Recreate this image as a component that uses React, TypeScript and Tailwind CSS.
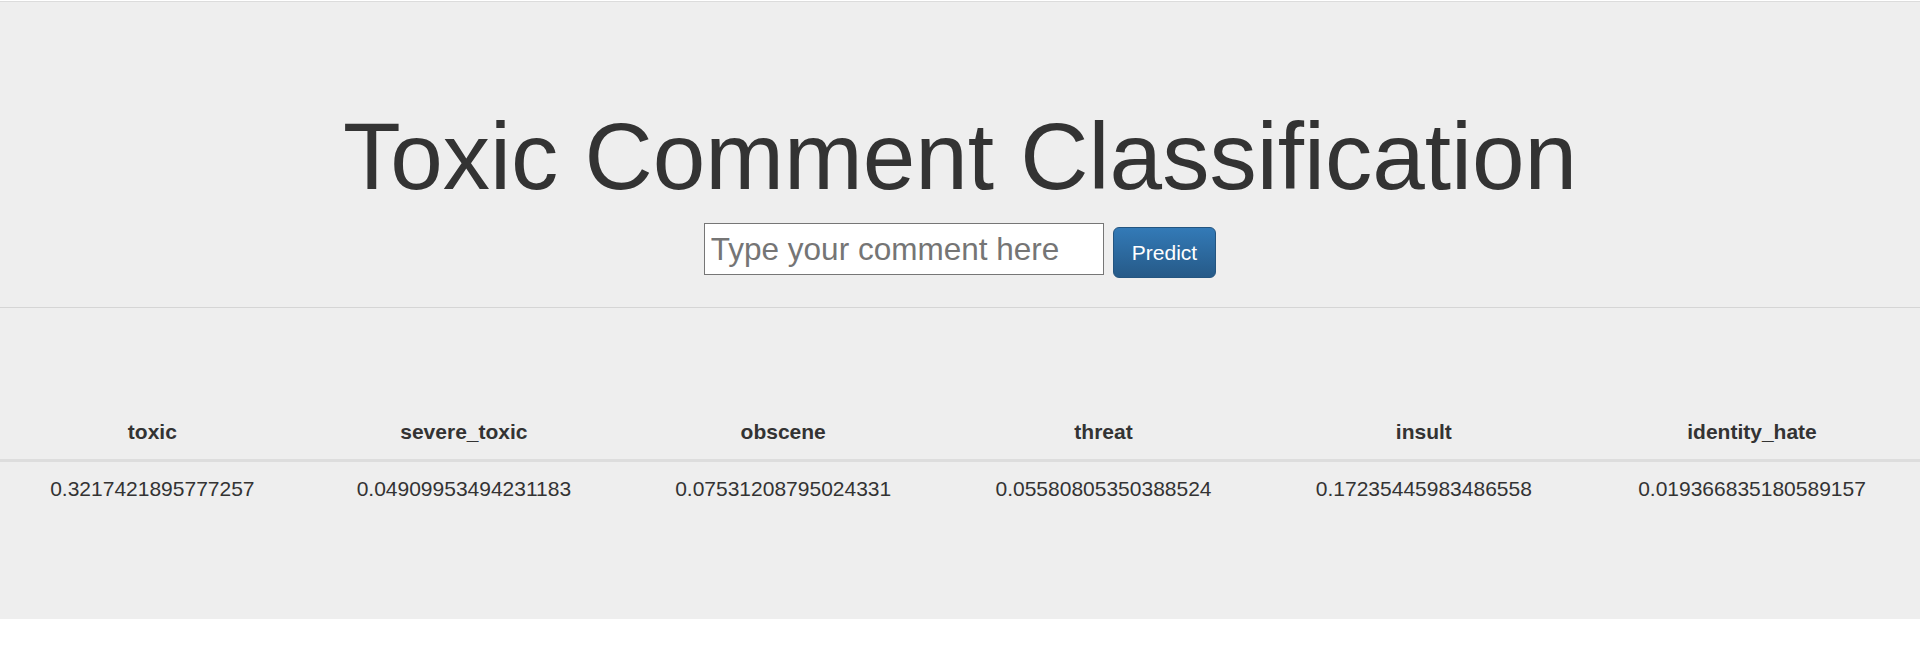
const labels = ["toxic", "severe_toxic", "obscene", "threat", "insult", "identity_hate"];

const scores = [
  "0.3217421895777257",
  "0.04909953494231183",
  "0.07531208795024331",
  "0.05580805350388524",
  "0.17235445983486558",
  "0.019366835180589157",
];

export default function App() {
  return (
    <div className="min-h-[654px] bg-white font-['Liberation_Sans',Arial,sans-serif] text-[#333333]">
      <div className="pt-px">
        <div className="h-[618px] border-t border-[#dcdcdc] bg-[#eeeeee]">
          <div className="flex flex-col items-center pt-[102px]">
            <h1 className="m-0 text-[94.5px] font-normal leading-[104px]">Toxic Comment Classification</h1>
            <form className="mt-[15px] flex items-start gap-[9px]" onSubmit={(e) => e.preventDefault()}>
              <input
                type="text"
                placeholder="Type your comment here"
                className="h-[52px] w-[400px] border border-[#767676] bg-white px-[6px] text-[31.5px] text-[#333] outline-none placeholder:text-[#757575]"
              />
              <button
                type="submit"
                className="mt-[4px] h-[51px] rounded-[6px] border border-[#245580] bg-gradient-to-b from-[#337ab7] to-[#265a88] px-[18px] text-[21px] leading-[30px] text-white"
              >
                Predict
              </button>
            </form>
          </div>
          <div className="mt-[29px] border-t border-[#d5d5d5]" />
          <table className="mt-[97px] w-full border-collapse text-[21px] leading-[30px]">
            <thead>
              <tr>
                {labels.map((l) => (
                  <th key={l} className="border-b-[3px] border-[#dddddd] px-[12px] py-[12px] text-center font-bold">
                    {l}
                  </th>
                ))}
              </tr>
            </thead>
            <tbody>
              <tr>
                {scores.map((s) => (
                  <td key={s} className="px-[12px] py-[12px] text-center">
                    {s}
                  </td>
                ))}
              </tr>
            </tbody>
          </table>
        </div>
      </div>
    </div>
  );
}
